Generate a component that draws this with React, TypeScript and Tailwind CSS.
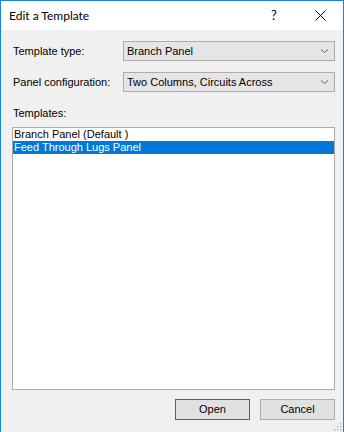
import { useState } from 'react';

const titleFont = { fontFamily: 'Lato, "Noto Sans", sans-serif' };
const bodyFont = { fontFamily: '"Liberation Sans", Arial, sans-serif' };

const Chevron = () => (
  <svg width="9" height="6" viewBox="0 0 9 6" className="shrink-0">
    <path d="M1 1.5 L4.5 4.5 L8 1.5" fill="none" stroke="#606060" strokeWidth="1" />
  </svg>
);

const Combo = ({ value }: { value: string }) => (
  <div className="flex-1 h-[20px] flex items-center justify-between bg-[#e5e5e5] border border-[#acacac] pl-[3px] pr-[5px] text-black">
    <span className="leading-none whitespace-nowrap">{value}</span>
    <Chevron />
  </div>
);

const templates = ['Branch Panel (Default )', 'Feed Through Lugs Panel'];

export default function App() {
  const [selected, setSelected] = useState(1);

  return (
    <div style={bodyFont} className="w-[344px] h-[432px] flex flex-col bg-[#f0f0f0] border-t border-l border-r border-[#1883d7] text-[11px] text-black select-none">
      <div style={titleFont} className="h-[29px] shrink-0 bg-white flex items-center pl-[8px]">
        <span className="flex-1 text-[12px] text-black whitespace-nowrap">Edit a Template</span>
        <span className="w-[46px] text-center text-[13px]">?</span>
        <button className="w-[46px] h-[29px] flex items-center justify-center">
          <svg width="11" height="11" viewBox="0 0 11 11">
            <path d="M0.5 0.5 L10.5 10.5 M10.5 0.5 L0.5 10.5" stroke="#000" strokeWidth="1" />
          </svg>
        </button>
      </div>

      <div className="flex-1 flex flex-col pl-[11px] pr-[8px] pt-[11px]">
        <div className="flex items-center h-[20px]">
          <span className="w-[111px] pl-[1px] whitespace-nowrap">Template type:</span>
          <Combo value="Branch Panel" />
        </div>
        <div className="flex items-center h-[20px] mt-[11px]">
          <span className="w-[111px] pl-[1px] whitespace-nowrap">Panel configuration:</span>
          <Combo value="Two Columns, Circuits Across" />
        </div>

        <div className="mt-[13px] pl-[1px] h-[17px] leading-[17px]">Templates:</div>

        <div className="mt-[5px] h-[263px] bg-white border border-[#acacac] flex flex-col">
          {templates.map((t, i) => (
            <div
              key={t}
              onClick={() => setSelected(i)}
              className={`h-[13px] leading-[13px] pl-[1px] whitespace-nowrap overflow-hidden ${selected === i ? 'bg-[#0078d7] text-white' : 'text-black'}`}
            >
              {t}
            </div>
          ))}
        </div>

        <div className="flex justify-end gap-[10px] mt-[9px]">
          <button className="w-[75px] h-[21px] bg-[#e1e1e1] border border-[#0078d7] leading-none">Open</button>
          <button className="w-[75px] h-[21px] bg-[#e1e1e1] border border-[#adadad] leading-none">Cancel</button>
        </div>
      </div>

      <div className="relative h-0">
        <svg width="10" height="10" viewBox="0 0 10 10" className="absolute right-[1px] bottom-[1px]">
          {[[8, 0], [8, 3], [8, 6], [5, 3], [5, 6], [2, 6]].map(([x, y]) => (
            <rect key={`${x}-${y}`} x={x} y={y + 2} width="1.5" height="1.5" fill="#b8b8b8" />
          ))}
        </svg>
      </div>
    </div>
  );
}
